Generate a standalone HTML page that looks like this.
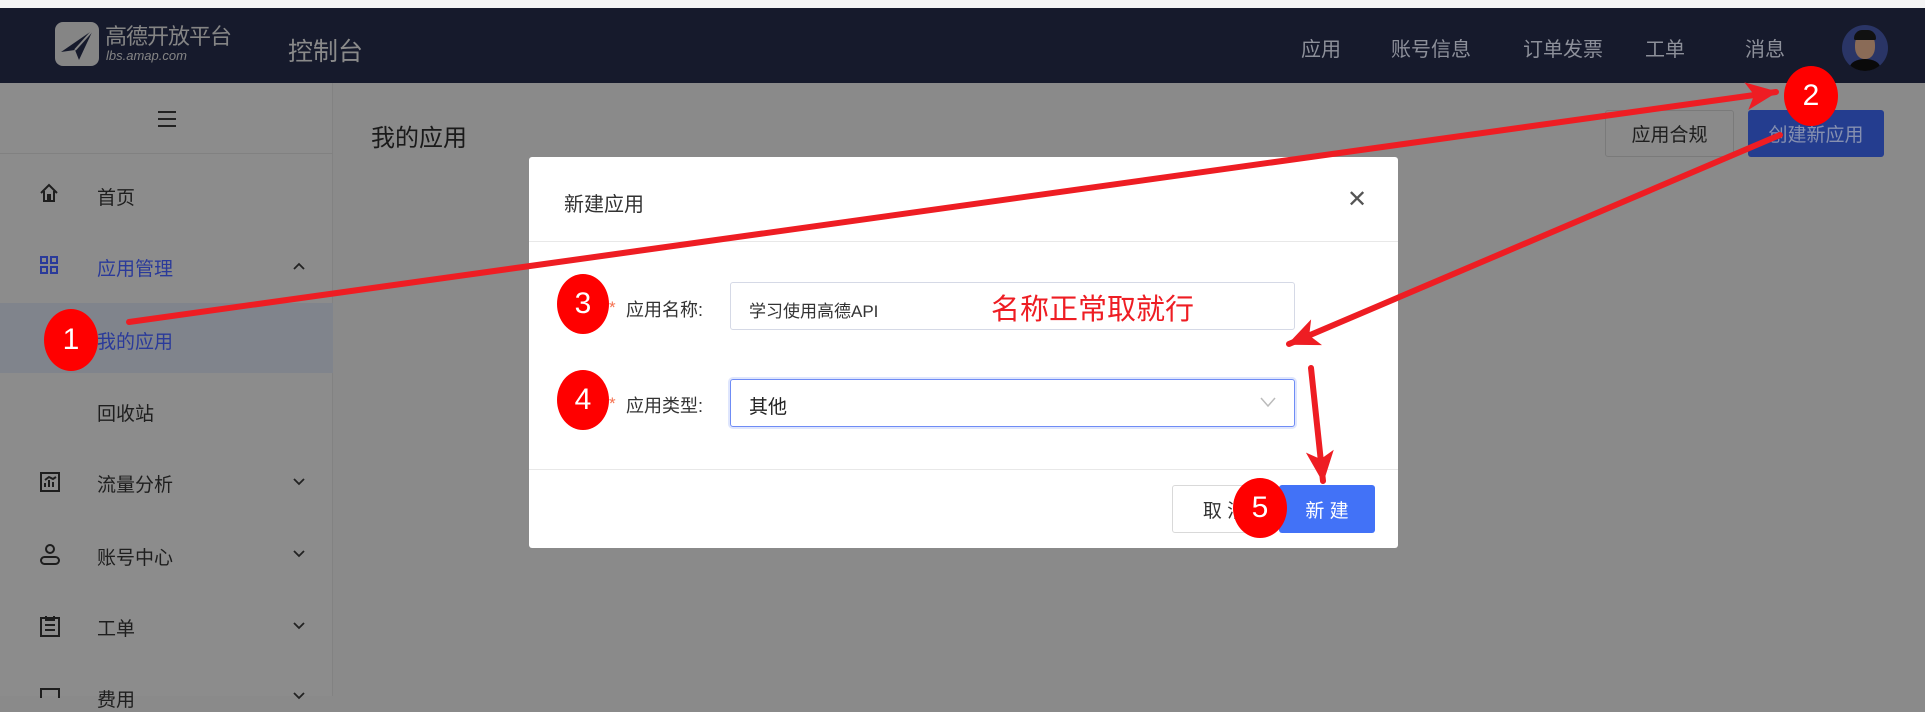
<!DOCTYPE html>
<html><head><meta charset="utf-8"><style>
*{margin:0;padding:0;box-sizing:border-box}
body{width:1925px;height:696px;overflow:hidden;position:relative;background:#8a8a8a;font-family:"Liberation Sans","Noto Sans CJK SC",sans-serif;color:#1a1a1a}
.a{position:absolute;white-space:nowrap}
.top{left:0;top:0;width:1925px;height:8px;background:#f4f4f4}
.hdr{left:0;top:8px;width:1925px;height:75px;background:#161a2c}
.nav{color:#8d909a;font-size:20px;top:33px}
.side{left:0;top:83px;width:333px;height:613px;background:#8c8c8c;border-right:1px solid #828282}
.mi{font-size:19px;color:#1e1e1e;left:97px}
.chev{left:293px}
.circ{background:#ff0000;border-radius:50%;color:#fff;font-size:30px;display:flex;align-items:center;justify-content:center}
.btn{border-radius:3px;font-size:19px;display:flex;align-items:center;justify-content:center}
.lbl{font-size:18px;color:#333}
</style></head><body>
<div class="a top"></div>
<div class="a hdr"></div>
<!-- logo -->
<div class="a" style="left:55px;top:22px;width:44px;height:44px;background:#858585;border-radius:8px"></div>
<svg class="a" style="left:55px;top:22px" width="44" height="44"><path d="M6 30 L38 8 L24 38 L20 28 Z" fill="#161a2c"/><path d="M20 28 L38 8" stroke="#858585" stroke-width="2"/></svg>
<div class="a" style="left:105px;top:19px;font-size:22px;color:#858585;letter-spacing:-1px">高德开放平台</div>
<div class="a" style="left:106px;top:48px;font-size:13px;font-style:italic;color:#858585">lbs.amap.com</div>
<div class="a" style="left:288px;top:32px;font-size:25px;color:#8a8a8a">控制台</div>
<div class="a nav" style="left:1301px">应用</div>
<div class="a nav" style="left:1391px">账号信息</div>
<div class="a nav" style="left:1523px">订单发票</div>
<div class="a nav" style="left:1645px">工单</div>
<div class="a nav" style="left:1745px">消息</div>
<div class="a" style="left:1842px;top:25px;width:46px;height:46px;border-radius:50%;background:#2a3566;overflow:hidden">
<div class="a" style="left:13px;top:8px;width:20px;height:26px;border-radius:45%;background:#8a6b57"></div>
<div class="a" style="left:12px;top:5px;width:22px;height:10px;border-radius:10px 10px 2px 2px;background:#111"></div>
<div class="a" style="left:8px;top:34px;width:30px;height:16px;border-radius:50% 50% 0 0;background:#0a0a0a"></div></div>
<!-- sidebar -->
<div class="a side"></div>
<div class="a" style="left:0;top:83px;width:333px;height:71px;border-bottom:1px solid #818181"></div>
<div class="a" style="left:158px;top:111px;width:18px;height:2px;background:#222;box-shadow:0 7px 0 #222,0 14px 0 #222"></div>
<div class="a" style="left:0;top:303px;width:333px;height:70px;background:#80848c"></div>
<svg class="a" style="left:39px;top:183px" width="20" height="20" fill="none" stroke="#1e1e1e" stroke-width="2"><path d="M2 10 L10 2 L18 10 M5 8 V18 H15 V8 M9 18 V12 H11 V18"/></svg>
<div class="a mi" style="top:183px">首页</div>
<svg class="a" style="left:40px;top:256px" width="18" height="18" fill="none" stroke="#2a3a9a" stroke-width="2"><rect x="1" y="1" width="6" height="6"/><rect x="11" y="1" width="6" height="6"/><rect x="1" y="11" width="6" height="6"/><rect x="11" y="11" width="6" height="6"/></svg>
<div class="a mi" style="top:254px;color:#2a3a9a">应用管理</div>
<svg class="a chev" style="top:262px" width="12" height="8" fill="none" stroke="#222" stroke-width="1.8"><path d="M1 7 L6 2 L11 7"/></svg>
<div class="a mi" style="top:327px;color:#2a3a9a">我的应用</div>
<div class="a mi" style="top:399px">回收站</div>
<svg class="a" style="left:40px;top:472px" width="20" height="20" fill="none" stroke="#1e1e1e" stroke-width="2"><rect x="1" y="1" width="18" height="18"/><path d="M5 15 V11 M9 15 V8 M13 15 V10 M5 8 L9 5 L13 7 L16 5"/></svg>
<div class="a mi" style="top:470px">流量分析</div>
<svg class="a chev" style="top:478px" width="12" height="8" fill="none" stroke="#222" stroke-width="1.8"><path d="M1 1 L6 6 L11 1"/></svg>
<svg class="a" style="left:40px;top:544px" width="20" height="22" fill="none" stroke="#1e1e1e" stroke-width="2"><circle cx="10" cy="5" r="4"/><rect x="1" y="13" width="18" height="7" rx="3.5"/></svg>
<div class="a mi" style="top:543px">账号中心</div>
<svg class="a chev" style="top:550px" width="12" height="8" fill="none" stroke="#222" stroke-width="1.8"><path d="M1 1 L6 6 L11 1"/></svg>
<svg class="a" style="left:40px;top:615px" width="20" height="22" fill="none" stroke="#1e1e1e" stroke-width="2"><rect x="1" y="3" width="18" height="18"/><path d="M6 1 V5 H14 V1 M5 10 H15 M5 15 H15"/></svg>
<div class="a mi" style="top:614px">工单</div>
<svg class="a chev" style="top:622px" width="12" height="8" fill="none" stroke="#222" stroke-width="1.8"><path d="M1 1 L6 6 L11 1"/></svg>
<svg class="a" style="left:40px;top:688px" width="20" height="10" fill="none" stroke="#1e1e1e" stroke-width="2"><rect x="1" y="1" width="18" height="18"/></svg>
<div class="a mi" style="top:685px">费用</div>
<svg class="a chev" style="top:692px" width="12" height="8" fill="none" stroke="#222" stroke-width="1.8"><path d="M1 1 L6 6 L11 1"/></svg>
<!-- content -->
<div class="a" style="left:371px;top:118px;font-size:24px;color:#1a1a1a">我的应用</div>
<div class="a btn" style="left:1605px;top:110px;width:129px;height:47px;border:1px solid #7a7a7a;color:#1e1e1e">应用合规</div>
<div class="a btn" style="left:1748px;top:110px;width:136px;height:47px;background:#243d8f;color:#8690b0">创建新应用</div>
<!-- modal -->
<div class="a" style="left:529px;top:157px;width:869px;height:391px;background:#fff;border-radius:3px"></div>
<div class="a" style="left:564px;top:188px;font-size:20px;color:#333">新建应用</div>
<div class="a" style="left:1347px;top:185px;font-size:24px;color:#555">✕</div>
<div class="a" style="left:529px;top:241px;width:869px;height:1px;background:#e8e8e8"></div>
<div class="a" style="left:609px;top:298px;color:#f5704f;font-size:17px">*</div>
<div class="a lbl" style="left:626px;top:296px">应用名称:</div>
<div class="a" style="left:730px;top:282px;width:565px;height:48px;border:1px solid #d5d9e6;border-radius:3px"></div>
<div class="a" style="left:749px;top:297px;font-size:17px;color:#333">学习使用高德API</div>
<div class="a" style="left:991px;top:286px;font-size:29px;color:#ee1d23">名称正常取就行</div>
<div class="a" style="left:609px;top:394px;color:#f5704f;font-size:17px">*</div>
<div class="a lbl" style="left:626px;top:392px">应用类型:</div>
<div class="a" style="left:730px;top:379px;width:565px;height:48px;border:1px solid #6f8cf5;border-radius:3px;box-shadow:0 0 0 2px #dfe6fd"></div>
<div class="a" style="left:749px;top:392px;font-size:19px;color:#222">其他</div>
<svg class="a" style="left:1260px;top:396px" width="16" height="12" fill="none" stroke="#bbb" stroke-width="1.5"><path d="M1 2 L8 10 L15 2"/></svg>
<div class="a" style="left:529px;top:469px;width:869px;height:1px;background:#e8e8e8"></div>
<div class="a btn" style="left:1172px;top:485px;width:105px;height:48px;border:1px solid #d9d9d9;color:#333">取 消</div>
<div class="a btn" style="left:1279px;top:485px;width:96px;height:48px;background:#4272f7;color:#fff">新 建</div>
<!-- annotations -->
<svg class="a" style="left:0;top:0" width="1925" height="696">
<defs><marker id="ah" markerUnits="userSpaceOnUse" markerWidth="36" markerHeight="28" refX="30" refY="14" orient="auto"><path d="M0 0 L32 14 L0 28 L8 14 Z" fill="#ee1d23"/></marker></defs>
<g stroke="#ee1d23" stroke-width="6" stroke-linecap="round" fill="none">
<path d="M129 322 L1776 92" marker-end="url(#ah)"/>
<path d="M1780 135 L1289 344" marker-end="url(#ah)"/>
<path d="M1311 368 L1323 481" marker-end="url(#ah)"/>
</g></svg>
<div class="a circ" style="left:44px;top:309px;width:54px;height:62px">1</div>
<div class="a circ" style="left:1784px;top:66px;width:54px;height:60px">2</div>
<div class="a circ" style="left:557px;top:274px;width:52px;height:60px">3</div>
<div class="a circ" style="left:557px;top:370px;width:52px;height:60px">4</div>
<div class="a circ" style="left:1233px;top:478px;width:54px;height:60px">5</div>
</body></html>
